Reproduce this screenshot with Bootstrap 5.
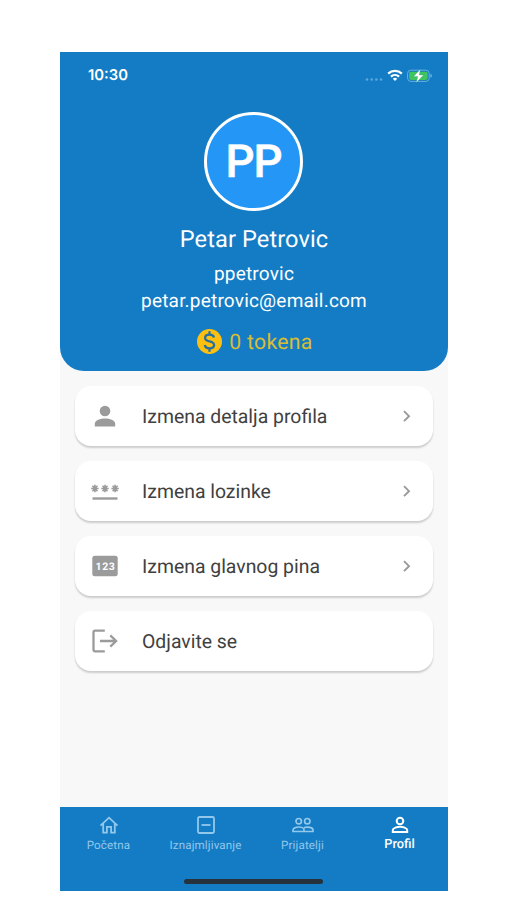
<!DOCTYPE html>
<html lang="sr-Latn">
<head>
<meta charset="utf-8">
<meta name="viewport" content="width=device-width, initial-scale=1">
<title>Profil</title>
<link href="https://cdn.jsdelivr.net/npm/bootstrap@5.3.0/dist/css/bootstrap.min.css" rel="stylesheet">
<style>
  body { background: #fff; font-family: Roboto, "Liberation Sans", sans-serif; height: 900px; overflow: hidden; text-rendering: geometricPrecision; }
  svg { display: block; flex: none; }
  .phone { width: 388px; height: 839px; margin: 52px 0 0 60px; background: #f8f8f8; }
  .profile-head { height: 319px; background: #137cc4; border-radius: 0 0 24px 24px; color: #fff; }
  .status { height: 47px; padding: 0 15px 0 28px; }
  .clock { font: 600 14.8px/1 Inter, sans-serif; }
  .signal { width: 18px; height: 3px; margin-top: 7px; }
  .avatar { width: 99px; height: 99px; margin: 13px 1px 0 0; padding-top: 3px; border: 3px solid #fff; background: #2496f5; font-size: 45.5px; font-weight: 500; letter-spacing: -1px; line-height: 1; -webkit-text-stroke: .5px #fff; }
  .full-name { font-size: 23.6px; line-height: 28px; margin-top: 14px; letter-spacing: .1px; }
  .user-line { font-size: 19px; line-height: 27px; letter-spacing: .2px; }
  .user-line.first { margin-top: 7px; }
  .tokens { font-size: 21.2px; line-height: 28px; margin-top: 13px; padding-left: 1px; color: #d9bd35; letter-spacing: .3px; gap: 7px; }
  .tokens span { padding-top: 2px; }
  .menu { padding: 15px; gap: 15px; }
  .menu-item { height: 60px; border-radius: 16px; background: #fff; color: #404040; padding: 0 16px 0 15px; font-size: 19.4px; letter-spacing: 0; box-shadow: 0 2px 2px rgba(0,0,0,.18); }
  .menu-item span { padding-top: 2px; }
  .menu-item .menu-icon { width: 30px; height: 30px; margin-right: 22px; color: #9b9b9b; }
  .tabs { height: 84px; background: #137cc4; position: relative; }
  .tab { width: 97px; color: #93c8eb; font-size: 11.6px; line-height: 14px; padding-top: 7px; letter-spacing: .14px; }
  .tab svg { margin-bottom: 2px; }
  .tab.current { color: #fff; font-size: 12.8px; font-weight: 500; line-height: 13px; letter-spacing: 0; }
  .tab.current svg { margin-bottom: 2px; }
  .home-bar { position: absolute; left: 124px; bottom: 7px; width: 139px; height: 5px; border-radius: 3px; background: #26333d; }
</style>
</head>
<body>
<main class="phone d-flex flex-column">
  <header class="profile-head d-flex flex-column align-items-center">
    <div class="status w-100 d-flex align-items-center">
      <span class="clock me-auto">10:30</span>
      <svg class="signal" viewBox="0 0 18 3" fill="#5ba9dc"><circle cx="2" cy="1.5" r="1.3"/><circle cx="6.7" cy="1.5" r="1.3"/><circle cx="11.3" cy="1.5" r="1.3"/><circle cx="16" cy="1.5" r="1.3"/></svg>
      <svg class="ms-1" width="16" height="13" viewBox="0 0 16 13" fill="none" stroke="#fff" stroke-width="2.2"><path d="M1.2 4.6a9.8 9.8 0 0 1 13.6 0M3.9 7.6a6 6 0 0 1 8.2 0"/><path d="M8 12 5.8 9.7a3.2 3.2 0 0 1 4.4 0z" fill="#fff" stroke="none"/></svg>
      <svg class="ms-1" width="26" height="14" viewBox="0 0 26 14"><rect x=".6" y="1.2" width="21.6" height="11.2" rx="3.2" fill="none" stroke="#68b1da"/><rect x="2.1" y="2.7" width="18.6" height="8.2" rx="1.8" fill="#3fc45e"/><path d="M23.4 4.8v4q1.7-.6 1.7-2T23.4 4.8" fill="#68b1da"/><path d="M13.4.3 6.6 7.4h4.2l-1.5 6.2 7.2-7.7h-4.3z" fill="#fff" stroke="#2b9a91" stroke-width=".3"/></svg>
    </div>
    <div class="avatar rounded-circle d-flex align-items-center justify-content-center">PP</div>
    <div class="full-name">Petar Petrovic</div>
    <div class="user-line first">ppetrovic</div>
    <div class="user-line">petar.petrovic@email.com</div>
    <div class="tokens d-flex align-items-center">
      <svg width="26" height="26" viewBox="0 0 26 26"><circle cx="13.5" cy="12.5" r="12.5" fill="#fdc010"/><path d="M18 8.5C17.6 6.5 15.9 5.700 13.500 5.700c-2.600 0-4.400 1.200-4.400 3.200 0 4.700 9 2.400 9 7.100 0 2.100-1.900 3.300-4.500 3.300s-4.500-1.100-4.900-3.300M13.500 2.300v3.400M13.500 19.300v3.400" fill="none" stroke="#286f9d" stroke-width="2.3"/></svg>
      <span>0 tokena</span>
    </div>
  </header>

  <section class="menu d-flex flex-column flex-grow-1">
    <div class="menu-item d-flex align-items-center">
      <svg class="menu-icon" viewBox="0 0 30 30" fill="currentColor"><circle cx="15" cy="10" r="5.3"/><path d="M4.800 25.400v-2.600C4.800 19.300 10.500 17.500 15 17.500s10.200 1.800 10.200 5.300v2.600z"/></svg>
      <span class="me-auto">Izmena detalja profila</span>
      <svg width="20" height="20" viewBox="0 0 20 20" fill="none" stroke="#999" stroke-width="1.9"><path d="m7 5.200 5 5-5 5"/></svg>
    </div>
    <div class="menu-item d-flex align-items-center">
      <svg class="menu-icon" viewBox="0 0 30 30" fill="none" stroke="currentColor"><path d="M2.500 22.500h25" stroke-width="2.400"/><g stroke-width="1.600"><path id="star" d="M4.900 8.700v7.600M1.200 12.500h7.400M2.400 9.800l5 5.400M7.400 9.800l-5 5.400"/><use href="#star" x="10.100"/><use href="#star" x="20.200"/></g></svg>
      <span class="me-auto">Izmena lozinke</span>
      <svg width="20" height="20" viewBox="0 0 20 20" fill="none" stroke="#999" stroke-width="1.9"><path d="m7 5.200 5 5-5 5"/></svg>
    </div>
    <div class="menu-item d-flex align-items-center">
      <svg class="menu-icon" viewBox="0 0 30 30"><rect x="2.300" y="4.800" width="25.400" height="20.400" rx="2.500" fill="currentColor"/><text x="15.500" y="18.700" text-anchor="middle" font-family="Roboto, sans-serif" font-size="10.500" font-weight="700" letter-spacing=".6" fill="#fff">123</text></svg>
      <span class="me-auto">Izmena glavnog pina</span>
      <svg width="20" height="20" viewBox="0 0 20 20" fill="none" stroke="#999" stroke-width="1.9"><path d="m7 5.200 5 5-5 5"/></svg>
    </div>
    <div class="menu-item d-flex align-items-center">
      <svg class="menu-icon" viewBox="0 0 30 30" fill="none" stroke="currentColor" stroke-width="2.300"><path d="M14.800 4.700H5.200Q3.500 4.700 3.500 6.400v17.200Q3.500 25.300 5.200 25.300h9.600M10 15h16M20.300 9.400l5.800 5.600-5.800 5.600"/></svg>
      <span>Odjavite se</span>
    </div>
  </section>

  <nav class="tabs d-flex">
    <div class="tab d-flex flex-column align-items-center">
      <svg width="22" height="22" viewBox="0 0 22 22" fill="none" stroke="currentColor" stroke-width="1.800"><path d="m2.500 11.700 8.500-8 8.500 8M5.200 9.600V18.700h3.700v-5.800h4.200v5.800h3.700V9.600"/></svg>
      <span>Početna</span>
    </div>
    <div class="tab d-flex flex-column align-items-center">
      <svg width="22" height="22" viewBox="0 0 22 22" fill="none" stroke="currentColor" stroke-width="1.800"><rect x="3" y="3" width="16" height="16" rx="1.400"/><path d="M6.500 11h9"/></svg>
      <span>Iznajmljivanje</span>
    </div>
    <div class="tab d-flex flex-column align-items-center">
      <svg width="22" height="22" viewBox="0 0 22 22" fill="none" stroke="currentColor" stroke-width="1.700"><circle cx="6.700" cy="7.200" r="2.700"/><circle cx="15.300" cy="7.200" r="2.700"/><path d="M1 17.500v-1.600c0-1.700 3.300-2.900 5.800-2.900s5.200 1.200 5.200 2.900v1.600zM12 13.600c3.600-1.400 9 .2 9 2.300v1.600h-9"/></svg>
      <span>Prijatelji</span>
    </div>
    <div class="tab current d-flex flex-column align-items-center">
      <svg width="22" height="22" viewBox="0 0 22 22" fill="none" stroke="currentColor" stroke-width="2"><circle cx="11" cy="7" r="3.300"/><path d="M3.800 18v-2c0-2.100 4.600-3.300 7.200-3.300s7.200 1.200 7.200 3.300v2z"/></svg>
      <span>Profil</span>
    </div>
    <div class="home-bar"></div>
  </nav>
</main>
<script src="https://cdn.jsdelivr.net/npm/bootstrap@5.3.0/dist/js/bootstrap.bundle.min.js"></script>
</body>
</html>
